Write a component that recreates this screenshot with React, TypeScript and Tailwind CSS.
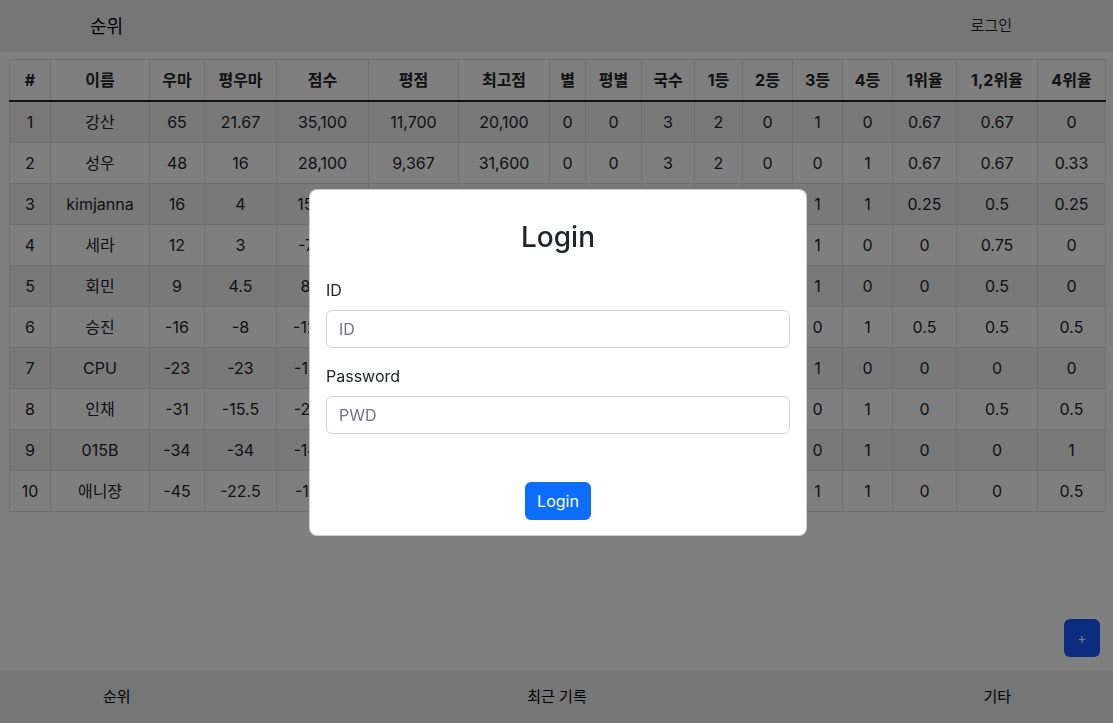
const headers = ["#", "이름", "우마", "평우마", "점수", "평점", "최고점", "별", "평별", "국수", "1등", "2등", "3등", "4등", "1위율", "1,2위율", "4위율"];
const widths = [41, 99, 55, 72, 92, 90, 91, 36, 56, 53, 48, 50, 50, 50, 64, 81, 68];

const rows = [
  ["1", "강산", "65", "21.67", "35,100", "11,700", "20,100", "0", "0", "3", "2", "0", "1", "0", "0.67", "0.67", "0"],
  ["2", "성우", "48", "16", "28,100", "9,367", "31,600", "0", "0", "3", "2", "0", "0", "1", "0.67", "0.67", "0.33"],
  ["3", "kimjanna", "16", "4", "15,200", "3,800", "42,300", "0", "0", "4", "1", "1", "1", "1", "0.25", "0.5", "0.25"],
  ["4", "세라", "12", "3", "-7,400", "-1,850", "31,200", "0", "0", "4", "0", "3", "1", "0", "0", "0.75", "0"],
  ["5", "회민", "9", "4.5", "8,600", "4,300", "33,600", "0", "0", "2", "0", "1", "1", "0", "0", "0.5", "0"],
  ["6", "승진", "-16", "-8", "-12,400", "-6,200", "41,800", "0", "0", "2", "1", "0", "0", "1", "0.5", "0.5", "0.5"],
  ["7", "CPU", "-23", "-23", "-13,700", "-13,700", "16,300", "0", "0", "1", "0", "0", "1", "0", "0", "0", "0"],
  ["8", "인채", "-31", "-15.5", "-21,800", "-10,900", "27,400", "0", "0", "2", "0", "1", "0", "1", "0", "0.5", "0.5"],
  ["9", "015B", "-34", "-34", "-14,200", "-14,200", "15,800", "0", "0", "1", "0", "0", "0", "1", "0", "0", "1"],
  ["10", "애니쟝", "-45", "-22.5", "-17,300", "-8,650", "19,900", "0", "0", "2", "0", "0", "1", "1", "0", "0", "0.5"],
];

export default function App() {
  return (
    <div className="relative flex h-[723px] flex-col bg-white text-[#212529] font-['Inter','Noto_Sans_CJK_KR',sans-serif]">
      {/* top nav */}
      <div className="flex h-[52px] items-center justify-between bg-[#ededed] pl-[90px] pr-[101px]">
        <span className="text-[18px] text-black">순위</span>
        <span className="text-[15px] text-black/85">로그인</span>
      </div>

      <div className="flex flex-1 flex-col">
        <table className="ml-[9px] mt-[7px] w-[1096px] table-fixed border-collapse text-center text-base">
          <colgroup>
            {widths.map((w, i) => (
              <col key={i} style={{ width: w }} />
            ))}
          </colgroup>
          <thead>
            <tr>
              {headers.map((h) => (
                <th key={h} className="border border-[#dee2e6] border-b-2 border-b-[#212529] px-1 py-2 font-bold leading-6">
                  {h}
                </th>
              ))}
            </tr>
          </thead>
          <tbody>
            {rows.map((r, i) => (
              <tr key={i} className={i % 2 === 0 ? "bg-[#f2f2f2]" : "bg-white"}>
                {r.map((c, j) => (
                  <td key={j} className="whitespace-nowrap border border-[#dee2e6] px-1 py-2 leading-6">
                    {c}
                  </td>
                ))}
              </tr>
            ))}
          </tbody>
        </table>

        <button className="mb-[14px] mr-[13px] mt-auto flex h-[38px] w-[36px] items-center justify-center self-end rounded-md bg-[#1658ff] text-sm text-white">
          +
        </button>
      </div>

      {/* bottom nav */}
      <div className="flex h-[52px] items-center justify-between bg-[#ececec] pl-[103px] pr-[102px] text-[15px] text-black">
        <span>순위</span>
        <span>최근 기록</span>
        <span>기타</span>
      </div>

      {/* modal */}
      <div className="fixed inset-0 flex items-center justify-center bg-black/50 pl-[3px] pt-[2px]">
        <div className="w-[498px] rounded-lg border border-black/20 bg-white px-4 pb-[15px] pt-[31px]">
          <h3 className="mb-[23px] text-center text-[28px] font-medium leading-[1.2]">Login</h3>
          <label className="mb-2 block leading-6">ID</label>
          <input
            placeholder="ID"
            className="mb-4 block h-[38px] w-full rounded-md border border-[#ced4da] px-3 text-base placeholder:text-[#6c757d]"
          />
          <label className="mb-2 block leading-6">Password</label>
          <input
            placeholder="PWD"
            className="block h-[38px] w-full rounded-md border border-[#ced4da] px-3 text-base placeholder:text-[#6c757d]"
          />
          <div className="mt-[48px] flex justify-center">
            <button className="h-[38px] rounded-md bg-[#0d6efd] px-3 text-base text-white">Login</button>
          </div>
        </div>
      </div>
    </div>
  );
}
